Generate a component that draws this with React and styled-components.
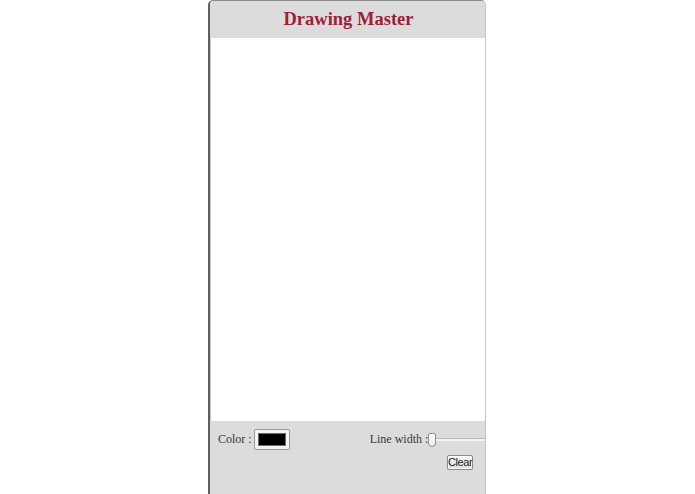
import React from "react";
import styled, { createGlobalStyle } from "styled-components";

const Global = createGlobalStyle`
  html, body { margin: 0; padding: 0; background: #ffffff; }
  body { font-family: "Liberation Serif", "Times New Roman", serif; }
`;

const Frame = styled.div`
  width: 278px;
  height: 494px;
  margin-left: 208px;
  display: flex;
  flex-direction: column;
  overflow: hidden;
  background: #dcdcdc;
  border-left: 2px solid #5e5e5e;
  border-right: 1px solid #c4c4c4;
  border-top: 1px solid #8a8a8a;
  border-radius: 5px 5px 0 0;
  box-sizing: border-box;
`;

const Header = styled.header`
  height: 37px;
  flex: none;
  display: flex;
  align-items: center;
  justify-content: center;
  background: #dcdcdc;
`;

const Title = styled.h1`
  margin: 0;
  font-family: "Liberation Serif", "Times New Roman", serif;
  font-weight: bold;
  font-size: 18.5px;
  color: #9a2236;
  padding-left: 2px;
`;

const Canvas = styled.div`
  height: 383px;
  flex: none;
  background: #ffffff;
  border-left: 1px solid #c8c8c8;
`;

const Controls = styled.div`
  flex: 1;
  display: flex;
  flex-direction: column;
  padding: 8px 12px 0 8px;
  gap: 5px;
`;

const Row = styled.div`
  display: flex;
  align-items: center;
  height: 21px;
  white-space: nowrap;
`;

const Label = styled.span`
  flex: none;
  font-family: "Liberation Serif", "Times New Roman", serif;
  font-size: 12px;
  color: #3a3a3a;
  margin-left: ${(p) => p.$offset || 0}px;
`;

const Swatch = styled.div`
  flex: none;
  width: 36px;
  height: 21px;
  margin-left: 2px;
  box-sizing: border-box;
  border: 1px solid #9a9a9a;
  border-radius: 2px;
  background: #f4f4f4;
  padding: 3px;
  display: flex;
`;

const SwatchFill = styled.div`
  flex: 1;
  background: ${(p) => p.$color};
  border: 1px solid #6a6a6a;
`;

const Slider = styled.div`
  display: flex;
  align-items: center;
  flex: none;
`;

const Track = styled.div`
  flex: none;
  height: 2px;
  width: ${(p) => p.$w}px;
  background: #f2f2f2;
  border-top: 1px solid #b9b9b9;
`;

const Thumb = styled.div`
  flex: none;
  width: 8px;
  height: 14px;
  box-sizing: border-box;
  border: 1px solid #8c8c8c;
  border-radius: 2px 2px 4px 4px;
  background: linear-gradient(#ffffff, #ececec);
`;

const ButtonRow = styled.div`
  display: flex;
  justify-content: flex-end;
`;

const Button = styled.button`
  font-family: "Liberation Sans", Arial, sans-serif;
  font-size: 11px;
  letter-spacing: -0.4px;
  color: #222;
  width: 26px;
  height: 15px;
  padding: 0;
  line-height: 11px;
  border: 1px solid #8a8a8a;
  border-radius: 2px;
  background: linear-gradient(#f7f7f7, #dedede);
  box-shadow: inset 0 0 0 1px #ffffff;
  cursor: pointer;
`;

export default function App() {
  return (
    <>
      <Global />
      <Frame>
        <Header>
          <Title>Drawing Master</Title>
        </Header>
        <Canvas />
        <Controls>
          <Row>
            <Label>Color :</Label>
            <Swatch>
              <SwatchFill $color="#000000" />
            </Swatch>
            <Label $offset={80}>Line width :</Label>
            <Slider>
              <Thumb />
              <Track $w={120} />
            </Slider>
          </Row>
          <ButtonRow>
            <Button>Clear</Button>
          </ButtonRow>
        </Controls>
      </Frame>
    </>
  );
}
